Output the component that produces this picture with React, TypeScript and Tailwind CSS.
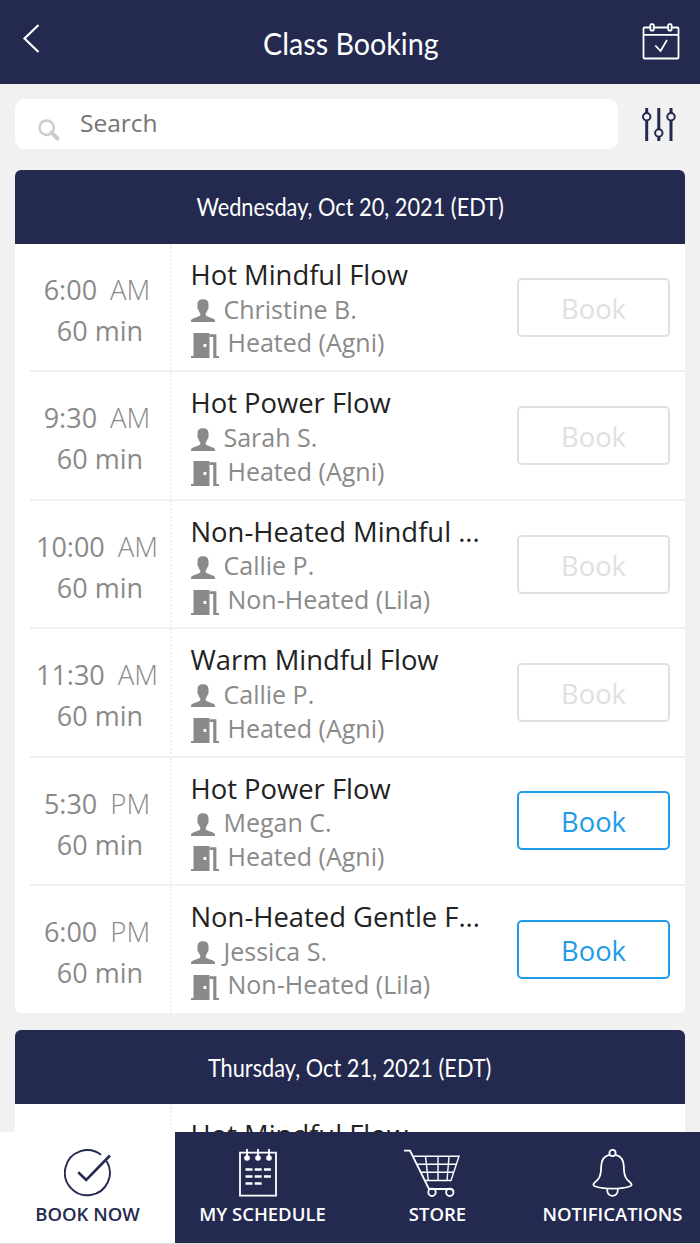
// App.tsx
import type { ReactNode } from 'react';

interface ClassItem {
    title: string;
    time?: string;
    period?: 'AM' | 'PM';
    duration?: string;
    instructor?: string;
    room?: string;
    bookable?: boolean;
}

interface Day {
    label: string;
    classes: ClassItem[];
}

const days: Day[] = [
    {
        label: 'Wednesday, Oct 20, 2021 (EDT)',
        classes: [
            { time: '6:00', period: 'AM', duration: '60 min', title: 'Hot Mindful Flow', instructor: 'Christine B.', room: 'Heated (Agni)' },
            { time: '9:30', period: 'AM', duration: '60 min', title: 'Hot Power Flow', instructor: 'Sarah S.', room: 'Heated (Agni)' },
            { time: '10:00', period: 'AM', duration: '60 min', title: 'Non-Heated Mindful ...', instructor: 'Callie P.', room: 'Non-Heated (Lila)' },
            { time: '11:30', period: 'AM', duration: '60 min', title: 'Warm Mindful Flow', instructor: 'Callie P.', room: 'Heated (Agni)' },
            { time: '5:30', period: 'PM', duration: '60 min', title: 'Hot Power Flow', instructor: 'Megan C.', room: 'Heated (Agni)', bookable: true },
            { time: '6:00', period: 'PM', duration: '60 min', title: 'Non-Heated Gentle F...', instructor: 'Jessica S.', room: 'Non-Heated (Lila)', bookable: true }
        ]
    },
    {
        label: 'Thursday, Oct 21, 2021 (EDT)',
        classes: [{ title: 'Hot Mindful Flow' }]
    }
];

const PersonIcon = () => (
    <svg width="24" height="23" viewBox="0 0 24 23" fill="currentColor">
        <path d="M12 .3c3.500 0 5.500 1.700 5.500 4.700 0 1.300-.1 2 .1 3.300 0 1.500-.6 2.300-1.100 2.700-.4 1.600-1 2.700-1.800 3.500v1.700c.5 1.200 3 1.600 5.300 2.500 2.800 1 4 1.700 4 3V23H0v-1.300c0-1.300 1.200-2 4-3 2.300-.9 4.800-1.300 5.300-2.500v-1.700c-.8-.8-1.400-1.900-1.800-3.500-.5-.4-1.100-1.200-1.100-2.700.2-1.300.1-2 .1-3.300C6.500 2 8.500.3 12 .3z" />
    </svg>
);

const DoorIcon = () => (
    <svg width="28" height="25" viewBox="0 0 28 25" fill="currentColor">
        <path fillRule="evenodd" d="M2.500 0h16v25H0v-2h2.500zM12.500 11v3h2.800v-3z" />
        <path d="M18.500 1.300h6.900V23H28v2h-5.800V4h-3.700z" />
    </svg>
);

const CalendarIcon = () => (
    <svg width="38" height="38" viewBox="0 0 38 38" fill="none" stroke="white" strokeWidth="1.800">
        <path d="M8 4.500H2.500a1 1 0 0 0-1 1v29a1 1 0 0 0 1 1h33a1 1 0 0 0 1-1v-29a1 1 0 0 0-1-1H30M12 4.500h14M1.500 11.800h35" />
        <rect x="8.400" y="1.200" width="3.400" height="6.300" rx="1" />
        <rect x="26.200" y="1.200" width="3.400" height="6.300" rx="1" />
        <path d="M13.300 22.500l5.200 5.500 6.500-11" />
    </svg>
);

const SlidersIcon = () => (
    <svg width="34" height="34" viewBox="0 0 34 34" fill="none" stroke="#242a4f">
        <path strokeWidth="3" d="M4.700 0v5M4.700 13v20M16.800 0v21M16.800 29v4M29 0v5M29 13v20" />
        <g strokeWidth="2">
            <circle cx="4.700" cy="8.800" r="3.700" />
            <circle cx="16.800" cy="25" r="3.700" />
            <circle cx="29" cy="8.800" r="3.700" />
        </g>
    </svg>
);

const BookNowIcon = () => (
    <svg width="48" height="48" viewBox="0 0 48 48" fill="none" stroke="currentColor">
        <path strokeWidth="1.900" d="M37 5.800A22.500 22.500 0 1 0 42.600 12" />
        <path strokeWidth="2.600" d="M14.200 23.200l8 7.800L46 6.500" />
    </svg>
);

const ScheduleIcon = () => (
    <svg width="38" height="48" viewBox="0 0 38 48" fill="none" stroke="currentColor">
        <path strokeWidth="1.800" d="M1 3.700h36v43H1z" />
        <path strokeWidth="1.800" d="M8 0v9M19 0v9M30 0v9" />
        <g fill="currentColor" stroke="none">
            <circle cx="8" cy="9" r="2.800" />
            <circle cx="19" cy="9" r="2.800" />
            <circle cx="30" cy="9" r="2.800" />
        </g>
        <path strokeWidth="2.400" d="M6.500 20.500h7M15.700 20.500h7M24.900 20.500h7M6.500 27.500h7M15.700 27.500h7M24.900 27.500h7M6.500 34.500h7M15.700 34.500h7" />
    </svg>
);

const CartIcon = () => (
    <svg width="58" height="48" viewBox="0 0 58 48" fill="none" stroke="currentColor" strokeWidth="1.800">
        <path d="M0 1.700h6L25 40h21c2 0 3 1 3.500 2" />
        <path strokeWidth="1.400" d="M9 7.300H55L47 31.500H21M12.500 15.300H52.500M16.500 23.300H49.700M21.500 7.300l2.800 24.200M34 7.300v24.200M45 7.300l-2 24.200" />
        <circle cx="28" cy="43.300" r="3.700" />
        <circle cx="45.800" cy="43.300" r="3.700" />
    </svg>
);

const BellIcon = () => (
    <svg width="41" height="48" viewBox="0 0 41 48" fill="none" stroke="currentColor" strokeWidth="1.800">
        <circle cx="20.500" cy="4" r="3.100" />
        <path d="M17.500 5.900C11.800 7.200 9.300 11.500 9.200 17c-.1 10-2 13.200-6.200 16.200-2.300 1.700-2.200 3.600.5 4.300 4.500 1.400 10.500 2.200 17 2.200s12.500-.8 17-2.200c2.700-.7 2.800-2.600.5-4.300-4.200-3-6.100-6.200-6.200-16.200-.1-5.500-2.600-9.800-8.300-11.100" />
        <path d="M15.300 39.700v2a5.200 5.200 0 0 0 10.400 0v-2" />
    </svg>
);

const ClassRow = ({ item }: { item: ClassItem }) => (
    <div className="group relative flex h-[128.400px] text-[#8a8a8a]">
        <div className="w-[157px] shrink-0 border-r-2 border-dotted border-[#eeeeee] pt-[25.100px] text-center text-[27px] leading-[41px]">
            {item.time && (
                <div className="flex justify-center gap-[13px] pl-[9px]">
                    <span>{item.time}</span>
                    <span className="text-[27.500px] font-light">{item.period}</span>
                </div>
            )}
            {item.duration && <div className="pl-[15px]">{item.duration}</div>}
        </div>
        <div className="flex-1 pt-[14px] pl-[18.500px] text-[25px] leading-[34px] whitespace-nowrap">
            <div className="text-[27.400px] text-[#222222]">{item.title}</div>
            {item.instructor && (
                <div className="-mt-[0.300px] flex items-center gap-[9px]">
                    <span className="pt-1"><PersonIcon /></span>
                    {item.instructor}
                </div>
            )}
            {item.room && (
                <div className="-mt-[0.300px] flex items-center gap-[9px]">
                    <span className="pt-1.5"><DoorIcon /></span>
                    {item.room}
                </div>
            )}
        </div>
        {item.room && (
            <button
                className={`mt-[33.900px] mr-[15px] h-[59px] w-[153px] shrink-0 rounded-[5px] border-2 pt-[4px] text-[27.300px] ${
                    item.bookable ? 'border-[#219be9] text-[#219be9]' : 'border-[#e0e0e0] text-[#e0e0e0]'
                }`}
            >
                Book
            </button>
        )}
        <div className="absolute right-0 bottom-0 left-[15px] h-[2px] bg-[#edf1f3] group-last:hidden" />
    </div>
);

const DaySection = ({ day }: { day: Day }) => (
    <section className="mb-[16.500px] overflow-hidden rounded-[6px] bg-white">
        <h2 className="flex h-[74.500px] items-center justify-center bg-[#242a4f] pt-[2px] font-['Lato',sans-serif] text-[24.500px] text-white">
            <span className="scale-x-[0.888]">{day.label}</span>
        </h2>
        <div className="-mb-px">
            {day.classes.map((item, i) => (
                <ClassRow key={i} item={item} />
            ))}
        </div>
    </section>
);

const NavItem = ({ icon, label, active }: { icon: ReactNode; label: string; active?: boolean }) => (
    <button
        className={`flex h-full w-[175px] flex-col items-center pt-[17px] text-[18.500px] font-semibold whitespace-nowrap ${
            active ? 'bg-white text-[#242a4f]' : 'text-white'
        }`}
    >
        {icon}
        <span className="mt-1 leading-[26px]">{label}</span>
    </button>
);

const App = () => {
    return (
        <div className="flex h-[1244px] w-[700px] flex-col overflow-hidden bg-[#f1f1f1] font-['Open_Sans',sans-serif]">
            {/* Header */}
            <header className="flex h-[84px] shrink-0 items-center justify-between bg-[#242a4f] pr-5 pl-[22px] text-white">
                <svg width="38" height="30" viewBox="0 0 38 30" fill="none" stroke="white" strokeWidth="2.200" className="mb-2">
                    <path d="M16.500 2L2.500 15.500l14 13.500" />
                </svg>
                <h1 className="scale-x-[0.925] pt-0.5 font-['Lato',sans-serif] text-[31px]">Class Booking</h1>
                <CalendarIcon />
            </header>

            {/* Search */}
            <div className="flex shrink-0 items-center px-[15px] pt-[15px]">
                <div className="flex h-[50px] w-[603px] items-center rounded-[10px] bg-white pl-[23px]">
                    <svg width="22" height="22" viewBox="0 0 22 22" fill="none" stroke="#cccccc" className="mt-3">
                        <circle cx="8.700" cy="8.700" r="7.200" strokeWidth="2.500" />
                        <path d="M13.500 13.500l6 6" strokeWidth="4" strokeLinecap="round" />
                    </svg>
                    <input
                        type="text"
                        placeholder="Search"
                        className="mb-0.5 ml-5 w-[400px] bg-transparent text-[24.500px] text-[#757575] outline-none placeholder:text-[#757575]"
                    />
                </div>
                <div className="ml-6 pt-0.5"><SlidersIcon /></div>
            </div>

            {/* Class list */}
            <main className="min-h-0 flex-1 overflow-hidden px-[15px] pt-[20.500px]">
                {days.map(day => (
                    <DaySection key={day.label} day={day} />
                ))}
            </main>

            {/* Bottom navigation */}
            <nav className="flex h-[112px] shrink-0 border-b border-[#dddddd] bg-[#242a4f]">
                <NavItem icon={<BookNowIcon />} label="BOOK NOW" active />
                <NavItem icon={<span className="mr-2.5"><ScheduleIcon /></span>} label="MY SCHEDULE" />
                <NavItem icon={<span className="mr-2.5"><CartIcon /></span>} label="STORE" />
                <NavItem icon={<BellIcon />} label="NOTIFICATIONS" />
            </nav>
        </div>
    );
};

export default App;
